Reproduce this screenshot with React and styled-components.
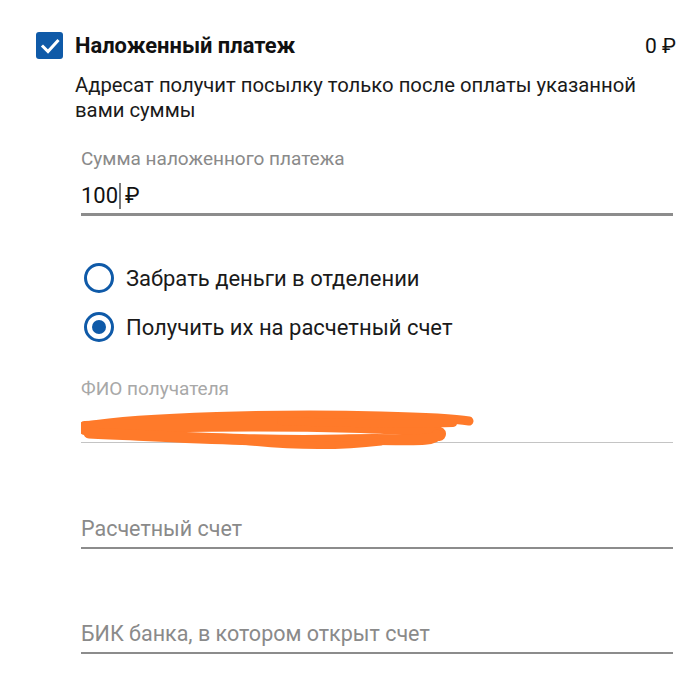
import React from "react";
import styled, { createGlobalStyle } from "styled-components";

const Global = createGlobalStyle`
  html, body { margin: 0; padding: 0; background: #fff; }
  body { font-family: Roboto, "Noto Sans", sans-serif; color: #1a1a1a; }
`;

const Page = styled.div`
  width: 700px;
  height: 673px;
  box-sizing: border-box;
  padding: 32px 24px 0 36px;
  overflow: hidden;
`;

const Header = styled.div`
  display: flex;
  align-items: center;
  height: 27px;
`;

const Check = styled.div`
  width: 27px;
  height: 27px;
  border-radius: 3px;
  background: #0f5aa8;
  display: flex;
  align-items: center;
  justify-content: center;
  flex: none;
`;

const Title = styled.div`
  margin-left: 12px;
  font-size: 21.9px;
  font-weight: 700;
  color: #111;
  flex: 1;
`;

const Amount = styled.div`
  font-size: 21px;
  color: #111;
`;

const Desc = styled.p`
  margin: 14px 0 0 39px;
  font-size: 20.3px;
  line-height: 25px;
  color: #1a1a1a;
`;

const Fields = styled.div`
  margin-left: 45px;
  margin-right: 3px;
`;

const Field = styled.div`
  position: relative;
  margin-top: ${(p) => p.$top}px;
  border-bottom: ${(p) => p.$line}px solid ${(p) => p.$color};
`;

const Label = styled.div`
  font-size: 19px;
  line-height: 22px;
  color: ${(p) => p.$color || "#8a8a8a"};
`;

const Value = styled.div`
  display: flex;
  align-items: center;
  font-size: 22px;
  line-height: 30px;
  color: #111;
  padding: 11px 0 2px;
`;

const Cursor = styled.span`
  display: inline-block;
  width: 2px;
  height: 26px;
  background: #7a7a7a;
  margin: 0 4px 0 1px;
`;

const Placeholder = styled.div`
  font-size: 21.5px;
  line-height: 28px;
  color: #8a8a8a;
  padding-bottom: 4px;
`;

const Radios = styled.div`
  margin: 47px 0 0 48px;
  display: flex;
  flex-direction: column;
  gap: 19px;
`;

const RadioRow = styled.div`
  display: flex;
  align-items: center;
  gap: 12px;
  font-size: 22px;
  color: #1a1a1a;
  height: 30px;
`;

const RadioCircle = styled.span`
  width: 30px;
  height: 30px;
  box-sizing: border-box;
  border: 3px solid #0f5aa8;
  border-radius: 50%;
  display: flex;
  align-items: center;
  justify-content: center;
  flex: none;
  &::after {
    content: "";
    width: 14px;
    height: 14px;
    border-radius: 50%;
    background: #0f5aa8;
    display: ${(p) => (p.$on ? "block" : "none")};
  }
`;

const NameArea = styled.div`
  height: 42px;
`;

const Scribble = styled.svg`
  position: absolute;
  left: 0;
  top: 31px;
  pointer-events: none;
`;

export default function App() {
  return (
    <Page>
      <Global />
      <Header>
        <Check>
          <svg width="20" height="20" viewBox="0 0 20 20">
            <path d="M3 10.5 L8 15.5 L17.5 5" fill="none" stroke="#fff" strokeWidth="3" strokeLinecap="square" />
          </svg>
        </Check>
        <Title>Наложенный платеж</Title>
        <Amount>0 ₽</Amount>
      </Header>
      <Desc>Адресат получит посылку только после оплаты указанной вами суммы</Desc>
      <Fields>
        <Field $top={25} $line={3} $color="#8c8c8c">
          <Label>Сумма наложенного платежа</Label>
          <Value>
            100<Cursor />₽
          </Value>
        </Field>
      </Fields>
      <Radios>
        <RadioRow>
          <RadioCircle />
          Забрать деньги в отделении
        </RadioRow>
        <RadioRow>
          <RadioCircle $on />
          Получить их на расчетный счет
        </RadioRow>
      </Radios>
      <Fields>
        <Field $top={36} $line={1} $color="#c4c4c4">
          <Label $color="#a8a8a8">ФИО получателя</Label>
          <NameArea />
          <Scribble width="400" height="44" viewBox="0 0 400 44">
            <g fill="none" stroke="#ff7a2a" strokeLinecap="round" strokeLinejoin="round">
              <path d="M5 17 C60 8 200 4 300 7 C340 8 370 9 388 12" strokeWidth="9" />
              <path d="M4 19 C100 15 200 15 280 17 C330 19 352 20 358 25" strokeWidth="14" />
              <path d="M8 24 C100 28 180 33 260 31 C320 29 352 34 356 26" strokeWidth="11" />
              <path d="M130 28 C190 37 250 39 300 33" strokeWidth="7" />
              <path d="M200 12 C260 14 320 16 372 14" strokeWidth="8" />
            </g>
          </Scribble>
        </Field>
        <Field $top={72} $line={2} $color="#8c8c8c">
          <Placeholder>Расчетный счет</Placeholder>
        </Field>
        <Field $top={71} $line={2} $color="#8c8c8c">
          <Placeholder>БИК банка, в котором открыт счет</Placeholder>
        </Field>
      </Fields>
    </Page>
  );
}
